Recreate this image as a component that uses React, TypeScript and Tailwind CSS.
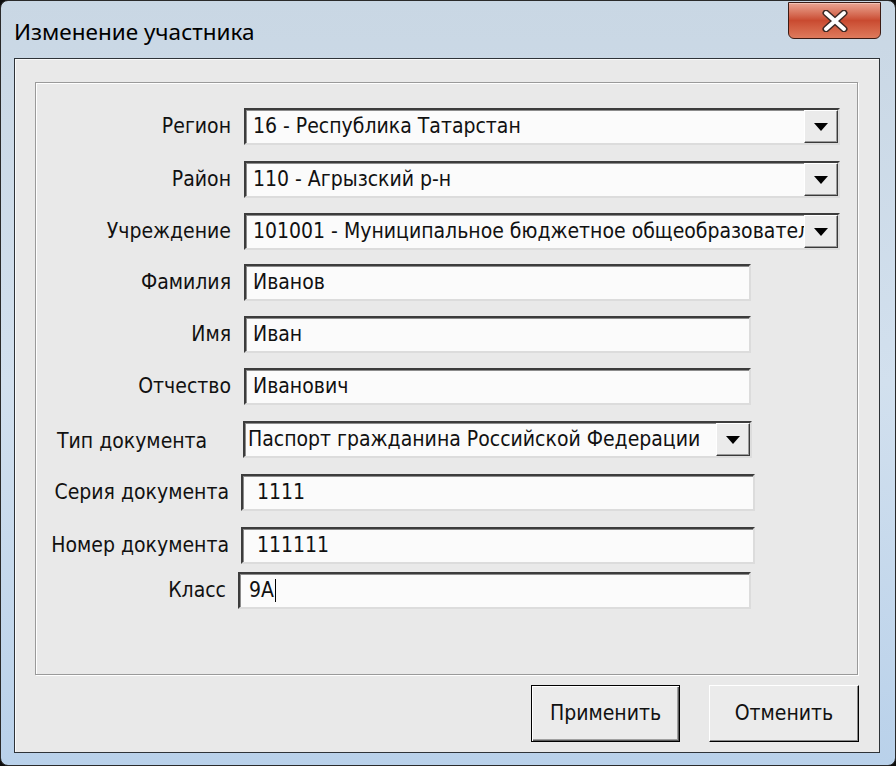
import React from 'react'

type Row = {
  label: string
  value: string
  combo?: boolean
  cursor?: boolean
  rowClass: string
  labelClass: string
  fieldClass: string
  textClass: string
}

const rows: Row[] = [
  { label: 'Регион', value: '16 - Республика Татарстан', combo: true, rowClass: 'mt-[25px]', labelClass: 'w-[208px] justify-end pr-[13px]', fieldClass: 'w-[596px]', textClass: 'pl-[7px]' },
  { label: 'Район', value: '110 - Агрызский р-н', combo: true, rowClass: 'mt-[16px]', labelClass: 'w-[208px] justify-end pr-[13px]', fieldClass: 'w-[596px]', textClass: 'pl-[7px]' },
  { label: 'Учреждение', value: '101001 - Муниципальное бюджетное общеобразовательное учреждение', combo: true, rowClass: 'mt-[15px]', labelClass: 'w-[208px] justify-end pr-[13px]', fieldClass: 'w-[596px]', textClass: 'pl-[7px]' },
  { label: 'Фамилия', value: 'Иванов', rowClass: 'mt-[14px]', labelClass: 'w-[208px] justify-end pr-[13px]', fieldClass: 'w-[507px]', textClass: 'pl-[7px]' },
  { label: 'Имя', value: 'Иван', rowClass: 'mt-[15px]', labelClass: 'w-[208px] justify-end pr-[13px]', fieldClass: 'w-[507px]', textClass: 'pl-[7px]' },
  { label: 'Отчество', value: 'Иванович', rowClass: 'mt-[15px]', labelClass: 'w-[208px] justify-end pr-[13px]', fieldClass: 'w-[507px]', textClass: 'pl-[7px]' },
  { label: 'Тип документа', value: 'Паспорт гражданина Российской Федерации', combo: true, rowClass: 'mt-[16px]', labelClass: 'w-[207px] justify-start pl-[21px] pt-[4px]', fieldClass: 'w-[509px]', textClass: 'pl-[3px]' },
  { label: 'Серия документа', value: '1111', rowClass: 'mt-[16px]', labelClass: 'w-[205px] justify-end pr-[12px]', fieldClass: 'w-[514px]', textClass: 'pl-[14px]' },
  { label: 'Номер документа', value: '111111', rowClass: 'mt-[16px]', labelClass: 'w-[205px] justify-end pr-[12px]', fieldClass: 'w-[514px]', textClass: 'pl-[14px]' },
  { label: 'Класс', value: '9A', cursor: true, rowClass: 'mt-[8px]', labelClass: 'w-[202px] justify-end pr-[12px]', fieldClass: 'w-[513px]', textClass: 'pl-[9px]' },
]

function Field({ row }: { row: Row }) {
  return (
    <div
      className={`${row.fieldClass} h-[37px] flex border-2 border-t-[#3c3c3c] border-l-[#3c3c3c] border-r-[#dcdcdc] border-b-[#dcdcdc] bg-[#fbfbfb] shadow-[inset_1px_1px_0_#8c8c8c]`}
    >
      <div className={`flex-1 min-w-0 flex items-center overflow-hidden whitespace-nowrap ${row.textClass}`}>
        <span>{row.value}</span>
        {row.cursor && <span className="ml-[1px] w-[1.5px] h-[23px] bg-black" />}
      </div>
      {row.combo && (
        <div className="w-[34px] shrink-0 flex items-center justify-center bg-[#ebebeb] border border-t-white border-l-white border-r-[#3a3a3a] border-b-[#3a3a3a] shadow-[inset_-1px_-1px_0_#9a9a9a]">
          <svg width="14" height="8" viewBox="0 0 14 8">
            <path d="M0 0h14L7 8z" fill="#000" />
          </svg>
        </div>
      )}
    </div>
  )
}

export default function App() {
  return (
    <div
      className="w-[896px] h-[766px] overflow-hidden bg-[#0d0d0d]"
      style={{ fontFamily: '"DejaVu Sans Condensed", "DejaVu Sans", sans-serif' }}
    >
      <div className="w-full h-full rounded-[8px] border border-[#2a2a2a] bg-gradient-to-b from-[#c9d7e4] via-[#d2e0ee] to-[#b9d1ea] flex flex-col">
        {/* title bar */}
        <div className="h-[57px] shrink-0 flex items-start relative">
          <div
            className="pl-[13px] pt-[14px] text-[22.5px] text-black"
            style={{ fontFamily: '"Noto Sans", "Open Sans", sans-serif' }}
          >
            Изменение участника
          </div>
          <div className="absolute left-[787px] top-[1px] w-[93px] h-[37px] rounded-b-[6px] border border-[#3b1b14] bg-gradient-to-b from-[#e9a593] via-[#c94a30] to-[#de7a5c] shadow-[inset_0_1px_0_#f3c2b4] flex items-center justify-center">
            <svg width="30" height="22" viewBox="0 0 30 22">
              <path d="M6 3L24 19M24 3L6 19" stroke="#3d2a26" strokeWidth="7" strokeLinecap="round" />
              <path d="M6 3L24 19M24 3L6 19" stroke="#ffffff" strokeWidth="4" strokeLinecap="round" />
            </svg>
          </div>
        </div>

        {/* client area */}
        <div className="ml-[13px] w-[866px] h-[695px] border border-[#2e3338] bg-[#e9e9e9] shadow-[inset_1px_1px_0_#fafafa] flex flex-col text-[21px] text-[#111]">
          <div className="ml-[20px] mt-[23px] w-[823px] h-[593px] border border-[#9a9a9a] shadow-[inset_1px_1px_0_#ffffff,1px_1px_0_#ffffff] flex flex-col">
            {rows.map((row) => (
              <div key={row.label} className={`flex items-center ${row.rowClass}`}>
                <div className={`${row.labelClass} flex shrink-0 whitespace-nowrap`}>{row.label}</div>
                <Field row={row} />
              </div>
            ))}
          </div>

          <div className="flex justify-end gap-[29px] pr-[20px] mt-[10px]">
            <button className="w-[149px] h-[57px] border border-black bg-[#ebebeb] shadow-[inset_1px_1px_0_#ffffff,inset_-1px_-1px_0_#5a5a5a,inset_-2px_-2px_0_#a0a0a0]">
              Применить
            </button>
            <button className="w-[150px] h-[57px] border border-t-white border-l-white border-r-black border-b-black bg-[#ebebeb] shadow-[inset_-1px_-1px_0_#8a8a8a]">
              Отменить
            </button>
          </div>
        </div>
      </div>
    </div>
  )
}
